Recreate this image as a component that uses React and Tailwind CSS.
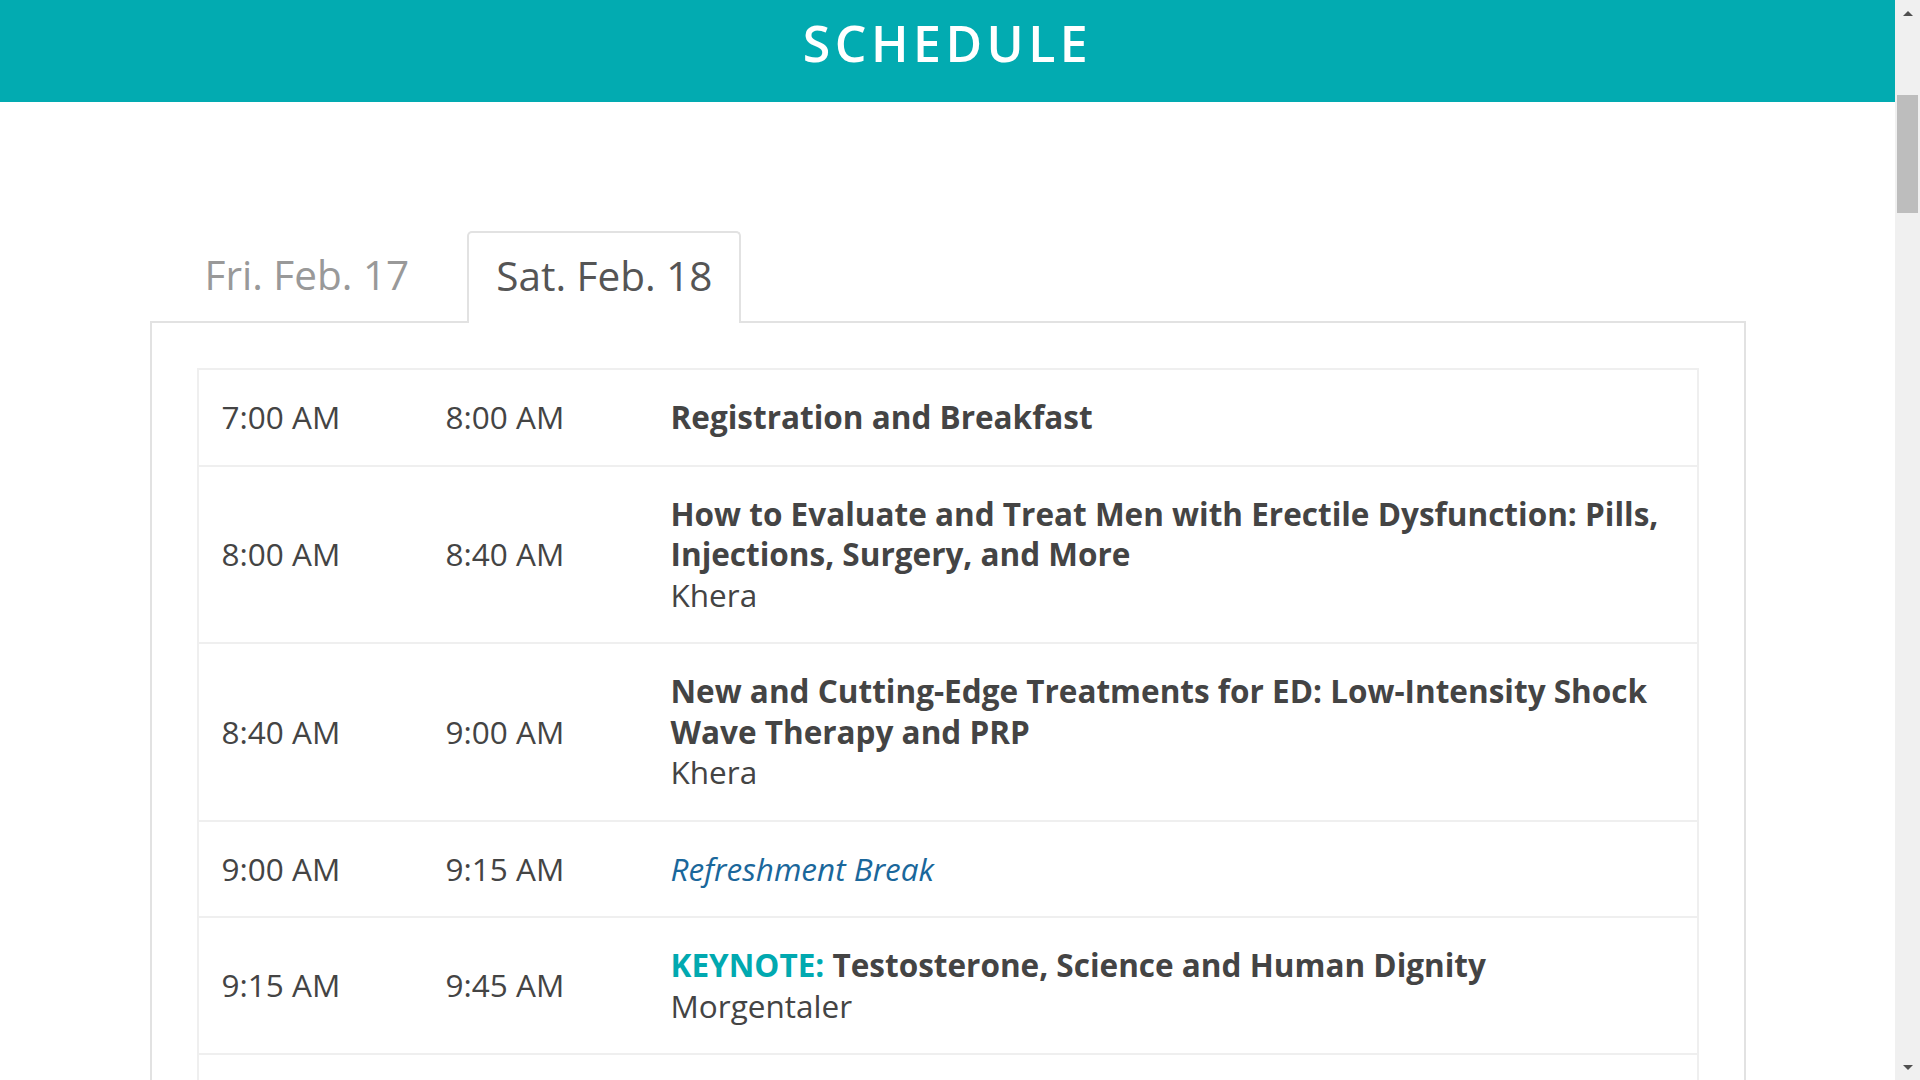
import React from 'react';

const rows = [
  { start: '7:00 AM', end: '8:00 AM', title: 'Registration and Breakfast' },
  {
    start: '8:00 AM',
    end: '8:40 AM',
    title: 'How to Evaluate and Treat Men with Erectile Dysfunction: Pills, Injections, Surgery, and More',
    speaker: 'Khera',
  },
  {
    start: '8:40 AM',
    end: '9:00 AM',
    title: 'New and Cutting-Edge Treatments for ED: Low-Intensity Shock Wave Therapy and PRP',
    speaker: 'Khera',
  },
  { start: '9:00 AM', end: '9:15 AM', title: 'Refreshment Break', isBreak: true },
  {
    start: '9:15 AM',
    end: '9:45 AM',
    title: 'Testosterone, Science and Human Dignity',
    label: 'KEYNOTE:',
    speaker: 'Morgentaler',
  },
  {
    start: '9:45 AM',
    end: '10:30 AM',
    title: 'Female Sexual Dysfunction: Evaluation and Management',
    speaker: 'Goldstein',
  },
];

/* Une ligne du programme */
function ScheduleRow({ row }) {
  return (
    <div className="flex items-center border-b-2 border-[#efefef] pl-[23px] pr-[24px] py-[27px] text-[31.5px] leading-[40.5px] text-[#444]">
      <div className="w-[224px] shrink-0">{row.start}</div>
      <div className="w-[225px] shrink-0">{row.end}</div>
      <div className="flex-1">
        {row.isBreak ? (
          <div className="italic text-[#1a679b]">{row.title}</div>
        ) : (
          <div className="font-bold">
            {row.label && <span className="text-[#01a9b0]">{row.label} </span>}
            {row.title}
          </div>
        )}
        {row.speaker && <div>{row.speaker}</div>}
      </div>
    </div>
  );
}

/* Barre de défilement dessinée */
function FakeScrollbar() {
  return (
    <div className="flex w-[25px] shrink-0 flex-col bg-[#f0f0f0]">
      <div className="flex h-[26px] items-center justify-center">
        <div className="h-0 w-0 border-x-[5px] border-b-[5px] border-x-transparent border-b-[#505050]" />
      </div>
      <div className="mx-[2px] mt-[69px] h-[118px] bg-[#bdbdbd]" />
      <div className="flex-1" />
      <div className="flex h-[26px] items-center justify-center">
        <div className="h-0 w-0 border-x-[5px] border-t-[5px] border-x-transparent border-t-[#505050]" />
      </div>
    </div>
  );
}

export default function App() {
  return (
    <div className="flex h-screen overflow-hidden bg-white font-['Open_Sans',sans-serif]">
      <main className="flex-1 overflow-hidden">
        {/* Bandeau */}
        <header className="h-[102px] bg-[#02abb1] pt-[18px] text-center">
          <h1 className="text-[50px] font-semibold leading-[50px] tracking-[0.09em] text-white">SCHEDULE</h1>
        </header>

        <div className="mx-auto mt-[129px] w-[1596px]">
          {/* Onglets */}
          <div className="ml-[26px] flex gap-[29px]">
            <div className="-mb-[2px] flex h-[92px] items-center px-[29px] pb-[4px] text-[40.5px] text-[#999]">
              Fri. Feb. 17
            </div>
            <div className="relative -mb-[2px] flex h-[92px] items-center rounded-t-[5px] border-2 border-b-0 border-[#e2e2e2] bg-white px-[27px] pb-[4px] text-[40.5px] text-[#555]">
              Sat. Feb. 18
            </div>
          </div>

          {/* Tableau */}
          <div className="border-2 border-[#e2e2e2] p-[45px]">
            <div className="border-x-2 border-t-2 border-[#efefef]">
              {rows.map((row) => (
                <ScheduleRow key={row.start} row={row} />
              ))}
            </div>
          </div>
        </div>
      </main>
      <FakeScrollbar />
    </div>
  );
}
